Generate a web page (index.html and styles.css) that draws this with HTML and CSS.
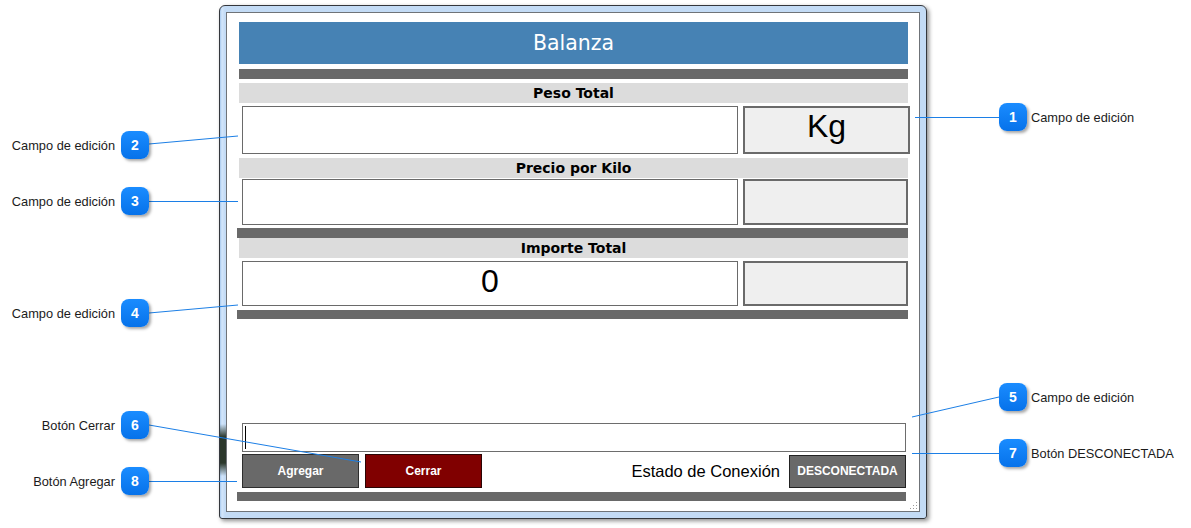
FILE: index.html
```html
<!DOCTYPE html>
<html lang="es">
<head>
    <meta charset="UTF-8">
    <meta name="viewport" content="width=device-width, initial-scale=1.0">
    <title>Balanza</title>
    <link rel="stylesheet" href="styles.css">
</head>
<body>
    <div class="page">
        <div class="window">
            <div class="client">
                <div class="title">Balanza</div>
                <div class="bar"></div>
                <div class="label">Peso Total</div>
                <div class="row row-first">
                    <div class="field"></div>
                    <div class="unit unit-wide">Kg</div>
                </div>
                <div class="label label-second">Precio por Kilo</div>
                <div class="row row-second">
                    <div class="field"></div>
                    <div class="unit"></div>
                </div>
                <div class="bar bar-wide bar-mid"></div>
                <div class="label label-third">Importe Total</div>
                <div class="row row-third">
                    <div class="field">0</div>
                    <div class="unit"></div>
                </div>
                <div class="bar bar-wide bar-low"></div>
                <div class="entry"><span class="caret"></span></div>
                <div class="actions">
                    <button type="button" class="btn btn-add">Agregar</button>
                    <button type="button" class="btn btn-close">Cerrar</button>
                    <span class="status">Estado de Conexión</span>
                    <button type="button" class="btn btn-state">DESCONECTADA</button>
                </div>
                <div class="bar bar-bottom"></div>
                <svg class="grip" width="9" height="9" viewBox="0 0 9 9">
                    <g fill="#9a9a9a">
                        <rect x="7" y="1" width="1" height="1"/>
                        <rect x="4" y="4" width="1" height="1"/>
                        <rect x="7" y="4" width="1" height="1"/>
                        <rect x="1" y="7" width="1" height="1"/>
                        <rect x="4" y="7" width="1" height="1"/>
                        <rect x="7" y="7" width="1" height="1"/>
                    </g>
                    <g fill="#fff">
                        <rect x="8" y="2" width="1" height="1"/>
                        <rect x="5" y="5" width="1" height="1"/>
                        <rect x="8" y="5" width="1" height="1"/>
                        <rect x="2" y="8" width="1" height="1"/>
                        <rect x="5" y="8" width="1" height="1"/>
                        <rect x="8" y="8" width="1" height="1"/>
                    </g>
                </svg>
            </div>
            <span class="glass"></span>
        </div>

        <svg class="leaders" width="1191" height="528" viewBox="0 0 1191 528">
            <g stroke="#1c7fe6" stroke-width="1" fill="none">
                <line x1="999" y1="117.5" x2="915" y2="117.5"/>
                <line x1="149" y1="144" x2="238" y2="136"/>
                <line x1="149" y1="201.5" x2="238" y2="201.5"/>
                <line x1="149" y1="313" x2="238" y2="305"/>
                <line x1="999" y1="397" x2="912" y2="417"/>
                <line x1="149" y1="425" x2="361" y2="462"/>
                <line x1="999" y1="453.5" x2="912" y2="453.5"/>
                <line x1="149" y1="481.5" x2="237" y2="481.5"/>
            </g>
        </svg>

        <div class="callout callout-left c2"><span class="note">Campo de edición</span><span class="badge">2</span></div>
        <div class="callout callout-left c3"><span class="note">Campo de edición</span><span class="badge">3</span></div>
        <div class="callout callout-left c4"><span class="note">Campo de edición</span><span class="badge">4</span></div>
        <div class="callout callout-left c6"><span class="note">Botón Cerrar</span><span class="badge">6</span></div>
        <div class="callout callout-left c8"><span class="note">Botón Agregar</span><span class="badge">8</span></div>

        <div class="callout callout-right c1"><span class="badge">1</span><span class="note">Campo de edición</span></div>
        <div class="callout callout-right c5"><span class="badge">5</span><span class="note">Campo de edición</span></div>
        <div class="callout callout-right c7"><span class="badge">7</span><span class="note">Botón DESCONECTADA</span></div>
    </div>
</body>
</html>
```

FILE: styles.css
```css
* {
    box-sizing: border-box;
}
body {
    margin: 0;
    background: #fff;
    font-family: "Liberation Sans", Arial, sans-serif;
}
.page {
    position: relative;
    width: 1191px;
    height: 528px;
    overflow: hidden;
}

/* window on the desktop */
.window {
    position: absolute;
    left: 219px;
    top: 5px;
    width: 708px;
    height: 514px;
    padding: 6px;
    border: 1px solid #34373c;
    border-radius: 6px 6px 3px 3px;
    background: linear-gradient(to right, #a7c9ee 0, #d3e6fb 2px, #c3dbf5 5px);
    box-shadow: 2px 2px 4px rgba(0,0,0,0.45);
}
.glass {
    position: absolute;
    left: 0;
    top: 418px;
    width: 6px;
    height: 52px;
    background: linear-gradient(to bottom, rgba(46,58,46,0), #2b382b 25%, #2b382b 75%, rgba(46,58,46,0));
}
.client {
    position: relative;
    height: 100%;
    border: 1px solid #6f7378;
    background: #fff;
    padding-top: 9px;
    display: flex;
    flex-direction: column;
}

.title {
    margin-left: 12px;
    width: 669px;
    height: 42px;
    background: #4682b4;
    color: #fff;
    font-family: "DejaVu Sans", sans-serif;
    font-size: 20.5px;
    line-height: 42px;
    text-align: center;
}
.bar {
    margin-top: 5px;
    margin-left: 12px;
    width: 669px;
    height: 10px;
    background: #696969;
}
.bar-wide {
    margin-left: 10px;
    width: 671px;
}
.bar-mid {
    margin-top: 3px;
}
.bar-low {
    margin-top: 4px;
    height: 9px;
}
.bar-bottom {
    margin-top: 4px;
    margin-left: 10px;
    width: 669px;
    height: 9px;
}

.label {
    margin-top: 4px;
    margin-left: 12px;
    width: 669px;
    height: 20px;
    background: #dcdcdc;
    font-family: "DejaVu Sans", sans-serif;
    font-weight: bold;
    font-size: 14px;
    line-height: 20px;
    text-align: center;
    color: #000;
}
.label-third {
    margin-top: 0;
}

.row {
    display: flex;
    gap: 5px;
    margin-top: 3px;
    margin-left: 15px;
    height: 48px;
}
.row-second {
    margin-top: 1px;
    height: 46px;
}
.row-third {
    height: 45px;
}
.field {
    width: 496px;
    border: 1px solid #6a6a6a;
    background: #fff;
    font-size: 32px;
    line-height: 36px;
    padding-top: 1px;
    text-align: center;
    color: #000;
}
.unit {
    width: 165px;
    border: 2px solid #6a6a6a;
    background: #efefef;
    font-size: 32px;
    line-height: 36px;
    text-align: center;
    color: #000;
}
.unit-wide {
    width: 167px;
}

.entry {
    position: relative;
    margin-top: 104px;
    margin-left: 15px;
    width: 664px;
    height: 29px;
    border: 1px solid #6d6d6d;
    background: #fff;
}
.caret {
    position: absolute;
    left: 2px;
    top: 2px;
    width: 1px;
    height: 23px;
    background: #000;
}

.actions {
    display: flex;
    align-items: center;
    margin-top: 2px;
    margin-left: 15px;
    width: 664px;
    height: 34px;
}
.btn {
    width: 117px;
    height: 34px;
    padding: 0;
    border: 1px solid #2e2e2e;
    color: #fff;
    font-family: "Liberation Sans", Arial, sans-serif;
    font-weight: bold;
    font-size: 12px;
    cursor: pointer;
}
.btn-add {
    background: #696969;
}
.btn-close {
    margin-left: 6px;
    background: #800000;
    border-color: #2a0505;
}
.btn-state {
    height: 33px;
    margin-left: 9px;
    background: #696969;
    border-color: #222;
}
.status {
    margin-left: auto;
    font-size: 16.5px;
    color: #000;
}
.grip {
    position: absolute;
    right: 1px;
    bottom: 1px;
}

/* callouts */
.leaders {
    position: absolute;
    left: 0;
    top: 0;
}
.callout {
    position: absolute;
    display: flex;
    align-items: center;
    height: 28px;
    font-size: 12.8px;
    color: #1b1b1b;
}
.callout-left {
    left: 0;
    width: 149px;
    justify-content: flex-end;
    gap: 6px;
}
.callout-right {
    left: 999px;
    gap: 4px;
}
.badge {
    width: 28px;
    height: 28px;
    border-radius: 8px;
    background: linear-gradient(#1a8cff, #0672ea);
    color: #fff;
    font-weight: bold;
    font-size: 14px;
    line-height: 28px;
    text-align: center;
    box-shadow: 2px 2px 3px rgba(0,0,0,0.35);
}
.c1 { top: 103px; }
.c2 { top: 131px; }
.c3 { top: 187px; }
.c4 { top: 299px; }
.c5 { top: 383px; }
.c6 { top: 411px; }
.c7 { top: 439px; }
.c8 { top: 467px; }
```
